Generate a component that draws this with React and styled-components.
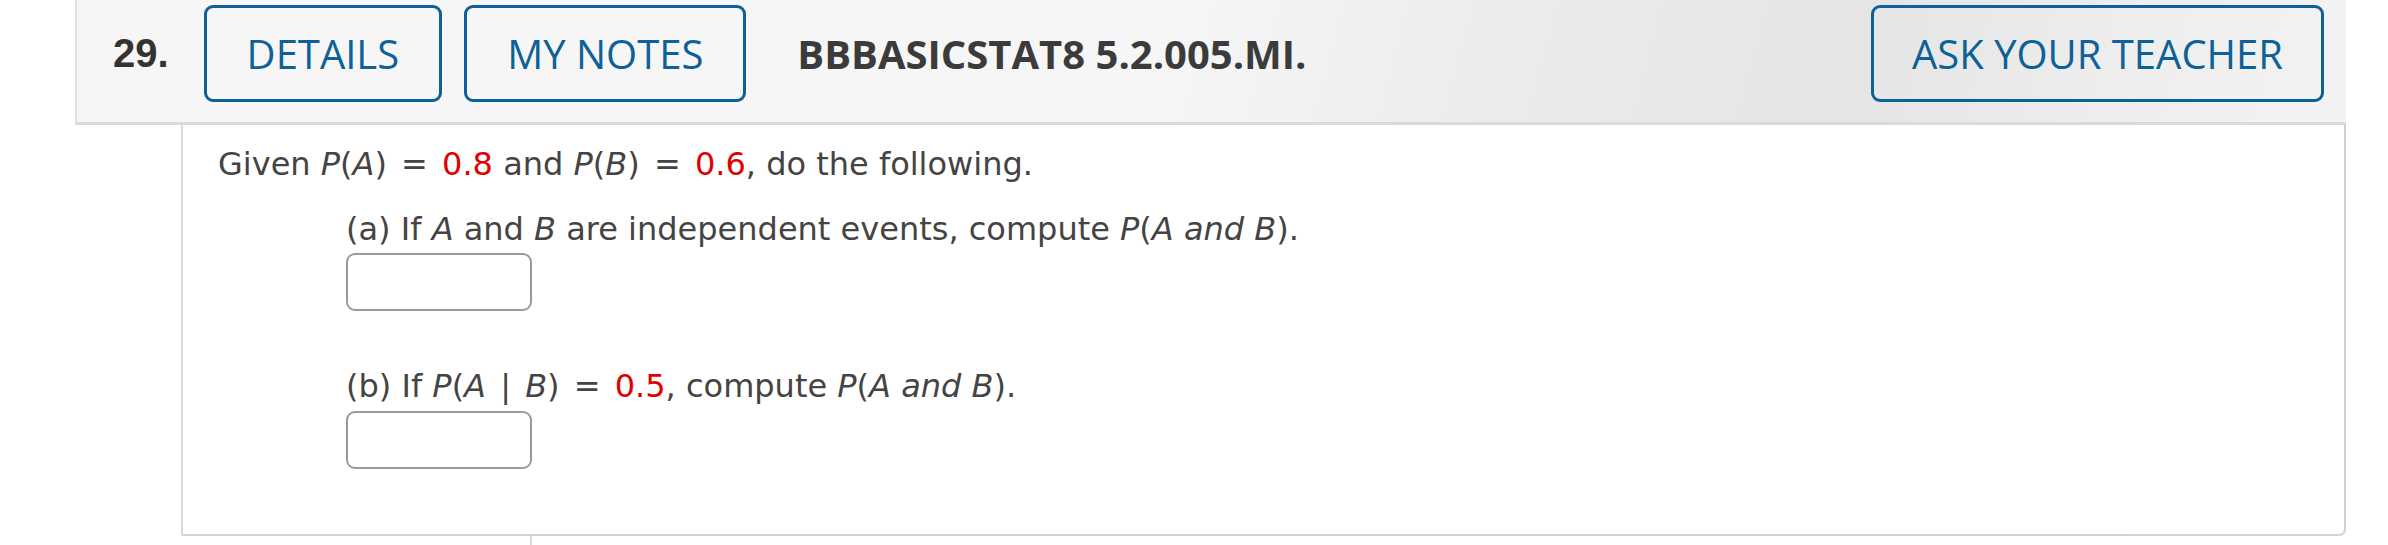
import React from "react";
import styled, { createGlobalStyle } from "styled-components";

const Global = createGlobalStyle`
  html, body { margin: 0; padding: 0; background: #ffffff; }
  body { width: 2388px; height: 545px; overflow: hidden; }
`;

const Page = styled.div`
  padding-left: 75px;
  width: 2271px;
`;

const Header = styled.div`
  display: flex;
  align-items: center;
  box-sizing: border-box;
  padding: 5px 22px 20px 36px;
  border-left: 2px solid #dedede;
  border-bottom: 3px solid #dadada;
  background: linear-gradient(105deg, #f6f6f6 0%, #f6f6f6 48%, #ececec 62%, #e5e5e5 78%, #eeeeee 90%, #f3f3f3 100%);
`;

const Number = styled.div`
  font-family: "Liberation Sans", Arial, sans-serif;
  font-weight: 700;
  font-size: 40px;
  color: #333333;
  margin-right: 35px;
`;

const OutlineButton = styled.button`
  height: 97px;
  box-sizing: border-box;
  padding: 0 ${(p) => p.$pad}px;
  border: 3px solid #0e6198;
  border-radius: 9px;
  background: transparent;
  color: #0e6198;
  font-family: "Open Sans", sans-serif;
  font-size: 40px;
  font-weight: 400;
  margin-right: ${(p) => p.$gap || 0}px;
  margin-left: ${(p) => (p.$push ? "auto" : "0")};
  white-space: nowrap;
`;

const Title = styled.div`
  font-family: "Open Sans", sans-serif;
  font-weight: 700;
  font-size: 40px;
  color: #3b3b3b;
  white-space: nowrap;
`;

const Body = styled.div`
  margin-left: 106px;
  height: 411px;
  box-sizing: border-box;
  border-left: 2px solid #d8d8d8;
  border-right: 2px solid #d0d0d0;
  border-bottom: 2px solid #d4d4d4;
  border-bottom-right-radius: 7px;
  padding: 17px 0 0 35px;
  font-family: "DejaVu Sans", Verdana, sans-serif;
  font-size: 32px;
  color: #444444;
`;

const Line = styled.div`
  line-height: 44px;
  white-space: nowrap;
  margin-bottom: ${(p) => p.$mb || 0}px;
`;

const Part = styled.div`
  padding-left: 128px;
  margin-top: ${(p) => p.$mt || 0}px;
`;

const V = styled.i`
  font-style: italic;
`;

const Red = styled.span`
  color: #e10000;
`;

const Op = styled.span`
  padding: 0 4px;
`;

const AnswerBox = styled.div`
  width: 186px;
  height: 58px;
  box-sizing: border-box;
  border: 2px solid #9a9a9a;
  border-radius: 9px;
  background: #ffffff;
`;

const Lower = styled.div`
  margin-left: 455px;
  margin-top: -2px;
  width: 1598px;
  height: 30px;
  border-top: 2px solid #d0d0d0;
  border-left: 2px solid #d8d8d8;
`;

export default function App() {
  return (
    <>
      <Global />
      <Page>
        <Header>
          <Number>29.</Number>
          <OutlineButton $pad={40} $gap={22}>DETAILS</OutlineButton>
          <OutlineButton $pad={40} $gap={51}>MY NOTES</OutlineButton>
          <Title>BBBASICSTAT8 5.2.005.MI.</Title>
          <OutlineButton $pad={38} $push>ASK YOUR TEACHER</OutlineButton>
        </Header>
        <Body>
          <Line $mb={21}>
            Given <V>P</V>(<V>A</V>)<Op> = </Op><Red>0.8</Red> and <V>P</V>(<V>B</V>)<Op> = </Op>
            <Red>0.6</Red>, do the following.
          </Line>
          <Part>
            <Line $mb={2}>
              (a) If <V>A</V> and <V>B</V> are independent events, compute <V>P</V>(<V>A and B</V>).
            </Line>
            <AnswerBox />
          </Part>
          <Part $mt={53}>
            <Line $mb={3}>
              (b) If <V>P</V>(<V>A</V><Op> | </Op><V>B</V>)<Op> = </Op><Red>0.5</Red>, compute{" "}
              <V>P</V>(<V>A and B</V>).
            </Line>
            <AnswerBox />
          </Part>
        </Body>
        <Lower />
      </Page>
    </>
  );
}
